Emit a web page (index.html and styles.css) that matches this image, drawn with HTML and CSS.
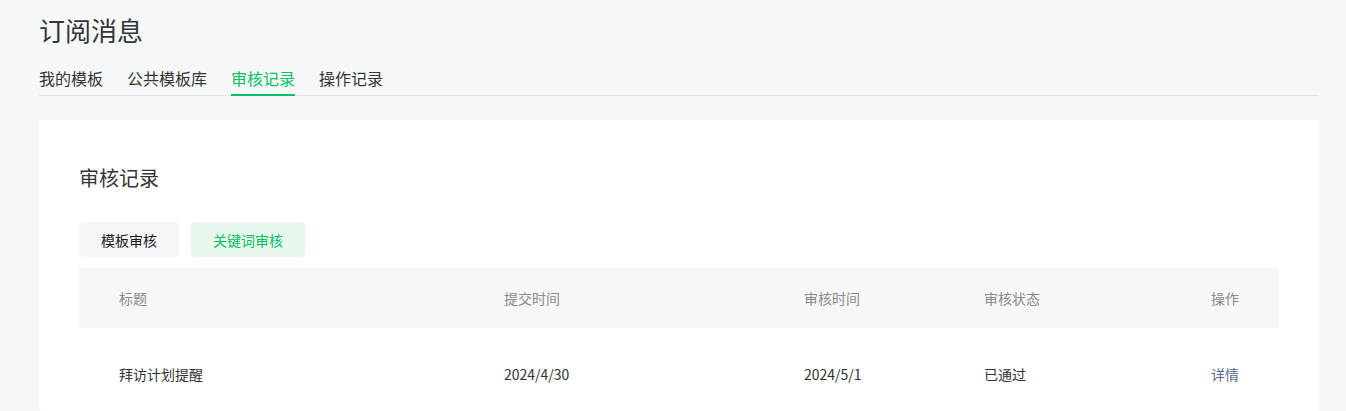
FILE: index.html
```html
<!DOCTYPE html>
<html lang="zh-CN">
<head>
    <meta charset="UTF-8">
    <meta name="viewport" content="width=device-width, initial-scale=1.0">
    <title>订阅消息</title>
    <link rel="stylesheet" href="styles.css">
</head>
<body>
    <div class="pagina">
        <h1 class="titulo_pagina">订阅消息</h1>

        <!-- Pestañas -->
        <div class="tabs">
            <span class="tab">我的模板</span>
            <span class="tab">公共模板库</span>
            <span class="tab tab_activa">审核记录</span>
            <span class="tab">操作记录</span>
        </div>

        <div class="tarjeta">
            <h2 class="titulo_tarjeta">审核记录</h2>

            <div class="botones">
                <span class="boton">模板审核</span>
                <span class="boton boton_activo">关键词审核</span>
            </div>

            <!-- Tabla -->
            <div class="tabla">
                <div class="fila fila_cabecera">
                    <span>标题</span>
                    <span>提交时间</span>
                    <span>审核时间</span>
                    <span>审核状态</span>
                    <span class="col_op">操作</span>
                </div>
                <div class="fila">
                    <span>拜访计划提醒</span>
                    <span>2024/4/30</span>
                    <span>2024/5/1</span>
                    <span>已通过</span>
                    <span class="col_op enlace">详情</span>
                </div>
            </div>
        </div>
    </div>
</body>
</html>
```

FILE: styles.css
```css
html, body {
    margin: 0;
    padding: 0;
    background-color: #f6f7f9;
    font-family: "Noto Sans CJK SC", "Noto Sans", sans-serif;
    color: #1a1a1a;
}

.pagina {
    padding: 0 27px 0 39px;
}

.titulo_pagina {
    margin: 0;
    padding-top: 12px;
    font-size: 26px;
    line-height: 36px;
    font-weight: 400;
    color: #353535;
}

.tabs {
    display: flex;
    gap: 24px;
    margin-top: 18px;
    border-bottom: 1px solid #e2e3e5;
}

.tab {
    font-size: 16px;
    line-height: 24px;
    padding-bottom: 4px;
    border-bottom: 2px solid transparent;
    margin-bottom: -1px;
    color: #353535;
}

.tab_activa {
    color: #07c160;
    border-bottom-color: #07c160;
}

.tarjeta {
    margin-top: 24px;
    background-color: #fff;
    border-radius: 4px;
    padding: 44px 40px 0;
    height: 247px;
}

.titulo_tarjeta {
    margin: 0;
    font-size: 20px;
    line-height: 28px;
    font-weight: 400;
    color: #353535;
}

.botones {
    display: flex;
    gap: 12px;
    margin-top: 30px;
}

.boton {
    display: flex;
    align-items: center;
    height: 35px;
    padding: 0 22px;
    font-size: 14px;
    border-radius: 4px;
    background-color: #f4f5f7;
    color: #1a1a1a;
}

.boton_activo {
    background-color: #e7f7ed;
    color: #07c160;
}

.tabla {
    margin-top: 11px;
}

.fila {
    display: grid;
    grid-template-columns: 385px 300px 180px 1fr 100px;
    align-items: center;
    height: 92px;
    padding: 0 40px;
    font-size: 14px;
    color: #333;
}

.fila_cabecera {
    height: 60px;
    background-color: #f6f7f9;
    color: #8a8a8a;
}

.col_op {
    text-align: right;
}

.enlace {
    color: #576b95;
}
```
